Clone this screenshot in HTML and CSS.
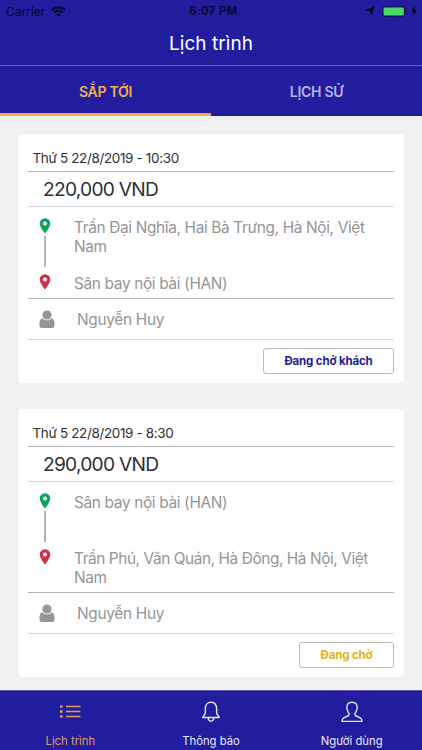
FILE: index.html
```html
<!DOCTYPE html>
<html lang="vi">
<head>
<meta charset="utf-8">
<title>Lịch trình</title>
<link rel="stylesheet" href="styles.css">
</head>
<body>
<svg class="defs" width="0" height="0">
  <symbol id="pin" viewBox="0 0 11 16"><path fill-rule="evenodd" d="M5.5.2A5.3 5.3 0 0 0 .2 5.5C.2 9.2 5.5 15.5 5.5 15.5S10.800 9.200 10.800 5.500A5.300 5.300 0 0 0 5.500.2ZM5.500 3.500a2 2 0 1 1 0 4 2 2 0 0 1 0-4Z"/></symbol>
  <symbol id="person" viewBox="0 0 16 19"><circle cx="8" cy="5" r="4.600"/><path d="M3.300 8.300C1.200 9 .5 11 .5 13.500V15.500C.5 17.200 1.500 18 3 18H13C14.500 18 15.500 17.200 15.500 15.500V13.500C15.500 11 14.800 9 12.700 8.300C10.400 11 5.600 11 3.300 8.300Z"/></symbol>
</svg>
<div class="app">
  <header>
    <div class="status">
      <div class="carrier"><span>Carrier</span>
        <svg width="15" height="11" viewBox="0 0 15 11" fill="none" stroke="currentColor" stroke-width="2.200"><path d="M.8 4C4.600.5 10.400.5 14.200 4M3.200 6.600C5.800 4.300 9.200 4.300 11.800 6.600"/><path d="M7.500 10.700 5.200 8.400Q7.500 6.600 9.800 8.400Z" fill="currentColor" stroke="none"/></svg>
      </div>
      <div class="clock">6:07 PM</div>
      <div class="power">
        <svg width="10" height="10" viewBox="0 0 10 10"><path d="M9.800.2 6 9.800 5.200 5.100.2 4.600Z"/></svg>
        <svg width="26" height="11" viewBox="0 0 26 11"><rect x=".5" y=".5" width="22.500" height="10" rx="2" fill="#171478" stroke="#151266"/><rect x="1.600" y="1.600" width="20.200" height="7.800" rx="1" fill="#4cdb67"/><path d="M24.500 4q1.500 1.500 0 3Z" fill="#151266"/></svg>
        <svg width="6" height="10" viewBox="0 0 6 10"><path d="M4 0 .2 5.500H2.700L1.700 10 5.900 4.100H3.400Z"/></svg>
      </div>
    </div>
    <h1><span>Lịch trình</span></h1>
    <nav class="tabs">
      <a class="on"><span>SẮP TỚI</span></a>
      <a><span>LỊCH SỬ</span></a>
    </nav>
  </header>
  <main>
    <article class="card">
      <div class="date"><span>Thứ 5 22/8/2019 - 10:30</span></div>
      <div class="price"><span>220,000 VND</span></div>
      <div class="route">
        <div class="stop from"><div class="mark"><svg class="pin"><use href="#pin"/></svg><i></i></div><p><span>Trần Đại Nghĩa, Hai Bà Trưng, Hà Nội, Việt</span><br>Nam</p></div>
        <div class="stop to"><div class="mark"><svg class="pin"><use href="#pin"/></svg></div><p>Sân bay nội bài (HAN)</p></div>
      </div>
      <div class="customer"><svg class="person"><use href="#person"/></svg><span>Nguyễn Huy</span></div>
      <div class="actions"><button class="picked"><span>Đang chở khách</span></button></div>
    </article>
    <article class="card">
      <div class="date"><span>Thứ 5 22/8/2019 - 8:30</span></div>
      <div class="price"><span>290,000 VND</span></div>
      <div class="route">
        <div class="stop from"><div class="mark"><svg class="pin"><use href="#pin"/></svg><i></i></div><p>Sân bay nội bài (HAN)</p></div>
        <div class="stop to"><div class="mark"><svg class="pin"><use href="#pin"/></svg></div><p><span class="tight">Trần Phú, Văn Quán, Hà Đông, Hà Nội, Việt</span><br>Nam</p></div>
      </div>
      <div class="customer"><svg class="person"><use href="#person"/></svg><span>Nguyễn Huy</span></div>
      <div class="actions"><button class="waiting"><span>Đang chờ</span></button></div>
    </article>
  </main>
  <footer>
    <a class="on"><svg width="22" height="22" viewBox="0 0 22 22" fill="none" stroke="currentColor" stroke-width="1.400"><path d="M7 5.500h14.500M7 10.500h14.500M7 15.500h14.500"/><path stroke-width="2.600" d="M1 5.500h2.600M1 10.500h2.600M1 15.500h2.600"/></svg><span>Lịch trình</span></a>
    <a><svg width="22" height="22" viewBox="0 0 22 22" fill="none" stroke="currentColor" stroke-width="1.400" stroke-linejoin="round"><path d="M11 1.200C7.500 1.200 5.400 3.800 5.400 7.200v4.300c0 2.400-2 3.300-2.600 5h16.400c-.6-1.700-2.600-2.600-2.600-5V7.200c0-3.400-2.100-6-5.600-6ZM8.200 17c.4 4.200 5.200 4.200 5.600 0"/></svg><span>Thông báo</span></a>
    <a><svg width="22" height="22" viewBox="0 0 22 22" fill="none" stroke="currentColor" stroke-width="1.400" stroke-linejoin="round"><path d="M11 1.200C7.500 1.200 5.500 3.600 5.800 7c.2 2.500 1 3.500 1.900 4.900.8 1.300.4 2.500-1 3.100l-3.600 1.600C1.500 17.300 1 18.600 1 20.400h20c0-1.800-.5-3.100-2.100-3.800L15.300 15c-1.400-.6-1.800-1.800-1-3.100.9-1.400 1.700-2.400 1.900-4.900.3-3.400-1.700-5.800-5.200-5.800Z"/></svg><span>Người dùng</span></a>
  </footer>
</div>
</body>
</html>
```
FILE: styles.css
```css
* { box-sizing: border-box; }
body { margin: 0; font-family: Inter, "Liberation Sans", sans-serif; }
.defs { display: block; position: absolute; }
.app { width: 422px; height: 750px; display: flex; flex-direction: column; overflow: hidden; background: #f1f1f2; }
span { white-space: nowrap; }
header { background: #221c9f; color: #fff; height: 116px; flex: none; }
.status { height: 22px; display: grid; grid-template-columns: 1fr auto 1fr; align-items: center; padding: 0 5px 0 6px; color: #08072f; font-size: 12px; }
.carrier, .power { display: flex; align-items: center; gap: 6px; }
.clock { font-weight: 600; font-size: 11.500px; letter-spacing: .4px; padding-left: 4px; }
.power { justify-content: flex-end; gap: 3px; }
.power svg:first-child { margin-right: 4px; }
h1 { margin: 0; height: 44px; border-bottom: 1px solid #625ec0; font-size: 19px; font-weight: 400; line-height: 43px; text-align: center; letter-spacing: .05px; }
.tabs { display: flex; height: 50px; }
.tabs a { flex: 1; text-align: center; line-height: 52px; height: 50px; font-size: 14px; font-weight: 600; letter-spacing: -.3px; color: #b8b5e4; }
.tabs .on { color: #f2ae4d; border-bottom: 3px solid #f4a93c; }
main { flex: 1; padding: 17px 17px 0; display: flex; flex-direction: column; gap: 24px; }
.card { background: #fff; border: 1px solid #eeeffc; border-radius: 4px; padding: 0 10px 9px; }
.date { height: 38px; border-bottom: 1px solid #b6b6b8; padding: 15px 0 0 4.500px; font-size: 13.500px; line-height: 18px; color: #303032; letter-spacing: -.36px; }
.price { height: 35px; border-bottom: 1px solid #d6d6d8; padding-left: 15px; font-size: 19.200px; line-height: 35px; color: #303032; letter-spacing: -.75px; }
.route { padding: 11px 0 5px; border-bottom: 1px solid #b6b6b8; }
.stop { display: flex; }
.from { min-height: 56px; color: #0ba55b; }
.to { color: #d12e48; }
.mark { width: 46px; padding-left: 11px; flex: none; }
.mark i { display: block; width: 2px; height: 31px; margin: 2px 0 0 5px; background: #b1b1c0; }
.pin { display: block; width: 12px; height: 16px; fill: currentColor; }
.stop p { margin: 0; color: #939597; font-size: 15.400px; line-height: 19px; letter-spacing: -.34px; }
.stop .tight { letter-spacing: -.42px; }
.customer { height: 41px; display: flex; align-items: center; border-bottom: 1px solid #d6d6d8; padding-left: 11px; color: #939597; font-size: 15.400px; letter-spacing: -.3px; }
.person { width: 16px; height: 19px; margin-right: 22px; fill: #939699; }
.actions { display: flex; justify-content: flex-end; padding-top: 8px; }
button { height: 26px; padding: 0; border: 1px solid #b9b9be; border-radius: 3px; background: #fff; font: 700 11.500px/23px Inter, sans-serif; letter-spacing: -.15px; }
.picked { width: 131px; color: #221c8f; }
.waiting { width: 95px; color: #dfb414; }
footer { height: 60px; border-top: 1px solid #5d58b5; background: #221c9f; display: flex; flex: none; }
footer a { flex: 1; display: flex; flex-direction: column; align-items: center; padding-top: 10px; color: #e9e8fa; font-size: 11.300px; line-height: 16px; }
footer svg { margin-bottom: 10px; }
footer .on { color: #dca05c; }
```
